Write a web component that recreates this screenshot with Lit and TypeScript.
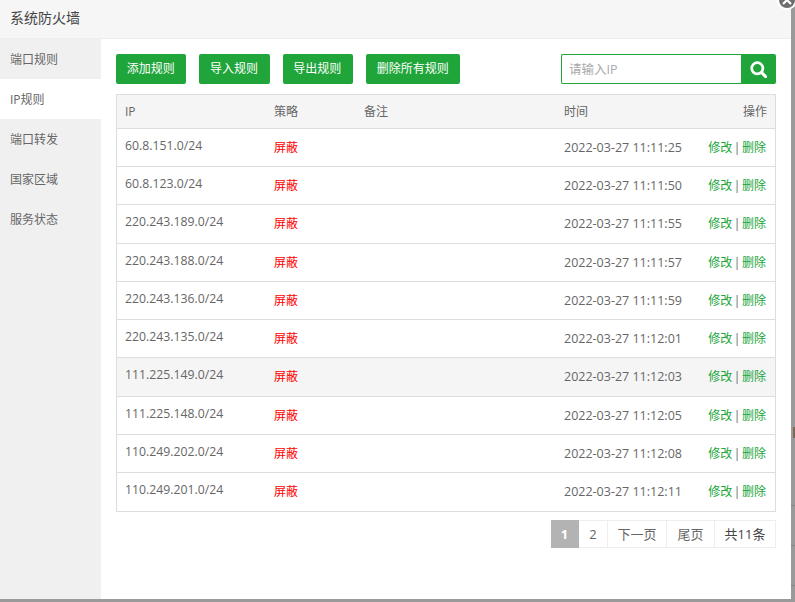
import { LitElement, html, css } from "lit";
import { customElement } from "lit/decorators.js";

const rows: [string, string, boolean][] = [
  ["60.8.151.0/24", "2022-03-27 11:11:25", false],
  ["60.8.123.0/24", "2022-03-27 11:11:50", false],
  ["220.243.189.0/24", "2022-03-27 11:11:55", false],
  ["220.243.188.0/24", "2022-03-27 11:11:57", false],
  ["220.243.136.0/24", "2022-03-27 11:11:59", false],
  ["220.243.135.0/24", "2022-03-27 11:12:01", false],
  ["111.225.149.0/24", "2022-03-27 11:12:03", true],
  ["111.225.148.0/24", "2022-03-27 11:12:05", false],
  ["110.249.202.0/24", "2022-03-27 11:12:08", false],
  ["110.249.201.0/24", "2022-03-27 11:12:11", false],
];

@customElement("app-root")
export class AppRoot extends LitElement {
  static styles = css`
    :host {
      display: block;
      width: 795px;
      height: 602px;
      overflow: hidden;
      position: relative;
      background-color: #9a9a9a;
      background-image:
        linear-gradient(#858585, #858585), linear-gradient(#858585, #858585),
        linear-gradient(#858585, #858585), linear-gradient(#7d6a55, #7d6a55);
      background-size: 4px 1px, 4px 1px, 4px 1px, 2px 11px;
      background-position: 791px 505px, 791px 545px, 791px 585px, 793px 427px;
      background-repeat: no-repeat;
      font-family: "Open Sans", "Noto Sans CJK SC", sans-serif;
      font-size: 12px;
      color: #666;
    }
    * { box-sizing: border-box; }
    .dialog {
      width: 791px;
      height: 599px;
      background: #fff;
      display: flex;
      flex-direction: column;
    }
    .title {
      height: 39px;
      flex: none;
      background: #f6f6f6;
      border-bottom: 1px solid #eee;
      padding-left: 10px;
      font-size: 14px;
      line-height: 36px;
      color: #444;
    }
    .body { flex: 1; display: flex; min-height: 0; }
    .side { width: 101px; flex: none; background: #f0f0f0; }
    .side div {
      height: 40px;
      line-height: 42px;
      padding-left: 10px;
      color: #666;
    }
    .side div.on { background: #fff; }
    .main { flex: 1; padding: 15px 15px 0; min-width: 0; }
    .tools { display: flex; align-items: stretch; height: 30px; margin-bottom: 10px; }
    .btn {
      height: 30px;
      line-height: 30px;
      padding: 0 11.64px 0 10.7px;
      background: #20a53a;
      color: #fff;
      border-radius: 2px;
      margin-right: 13px;
    }
    .search { margin-left: auto; display: flex; width: 215px; height: 30px; }
    .search .input {
      flex: 1;
      border: 1px solid #20a53a;
      border-right: 0;
      border-radius: 2px 0 0 2px;
      padding-left: 7px;
      line-height: 29px;
      font-size: 12.5px;
      color: #aaa;
    }
    .search .go {
      width: 35px;
      background: #20a53a;
      border-radius: 0 2px 2px 0;
      display: flex;
      align-items: center;
      justify-content: center;
    }
    .table { border: 1px solid #ddd; }
    .row {
      display: grid;
      grid-template-columns: 149px 90px 199px 1fr auto;
      padding: 0 8px;
      height: 38.25px;
      border-top: 1px solid #ddd;
      align-items: start;
    }
    .row:last-child { height: 39px; }
    .row.head {
      height: 32.9px;
      border-top: 0;
      background: #f5f5f5;
      line-height: 33px;
    }
    .row.hl { background: #f5f5f5; }
    .ip { line-height: 33px; font-size: 12.25px; }
    .st { color: #f00; line-height: 38px; }
    .tm { line-height: 38px; font-size: 12.5px; padding-left: 1px; }
    .th { padding-left: 1px; }
    .op { text-align: right; line-height: 38px; word-spacing: -1.5px; padding-right: 1px; }
    .op a { color: #20a53a; }
    .pager { display: flex; justify-content: flex-end; margin-top: 8px; }
    .pager span {
      height: 28px;
      line-height: 27px;
      border: 1px solid #eee;
      border-left-width: 0;
      font-size: 13px;
      text-align: center;
    }
    .pager span.cur {
      width: 28px;
      background: #b3b3b3;
      border-color: #b3b3b3;
      color: #fff;
      font-weight: 700;
    }
    .pager span.n { width: 29px; }
    .pager span.next { width: 59px; }
    .pager span.last { width: 48px; }
    .pager span.total { width: 61px; color: #444; }
    .close {
      position: absolute;
      left: 777px;
      top: -10px;
      width: 20px;
      height: 20px;
    }
  `;

  render() {
    return html`
      <div class="dialog">
        <div class="title">系统防火墙</div>
        <div class="body">
          <div class="side">
            <div>端口规则</div>
            <div class="on">IP规则</div>
            <div>端口转发</div>
            <div>国家区域</div>
            <div>服务状态</div>
          </div>
          <div class="main">
            <div class="tools">
              <div class="btn">添加规则</div>
              <div class="btn">导入规则</div>
              <div class="btn">导出规则</div>
              <div class="btn">删除所有规则</div>
              <div class="search">
                <div class="input">请输入IP</div>
                <div class="go">
                  <svg width="17" height="17" viewBox="0 0 17 17" fill="none" stroke="#fff">
                    <circle cx="7.3" cy="7.3" r="5.6" stroke-width="2.7"></circle>
                    <path d="M11.6 11.6 15.6 15.6" stroke-width="3" stroke-linecap="round"></path>
                  </svg>
                </div>
              </div>
            </div>
            <div class="table">
              <div class="row head">
                <div>IP</div><div>策略</div><div>备注</div><div class="th">时间</div><div>操作</div>
              </div>
              ${rows.map(
                ([ip, t, hl]) => html`
                  <div class="row ${hl ? "hl" : ""}">
                    <div class="ip">${ip}</div>
                    <div class="st">屏蔽</div>
                    <div></div>
                    <div class="tm">${t}</div>
                    <div class="op"><a>修改</a> | <a>删除</a></div>
                  </div>
                `
              )}
            </div>
            <div class="pager">
              <span class="cur">1</span><span class="n">2</span><span class="next">下一页</span><span class="last">尾页</span><span class="total">共11条</span>
            </div>
          </div>
        </div>
      </div>
      <svg class="close" viewBox="0 0 20 20">
        <circle cx="10" cy="10" r="10" fill="#fff"></circle>
        <circle cx="10" cy="10" r="8" fill="#6e6e6e"></circle>
        <path d="M6 6l8 8M14 6l-8 8" stroke="#fff" stroke-width="2.2" fill="none"></path>
      </svg>
    `;
  }
}
